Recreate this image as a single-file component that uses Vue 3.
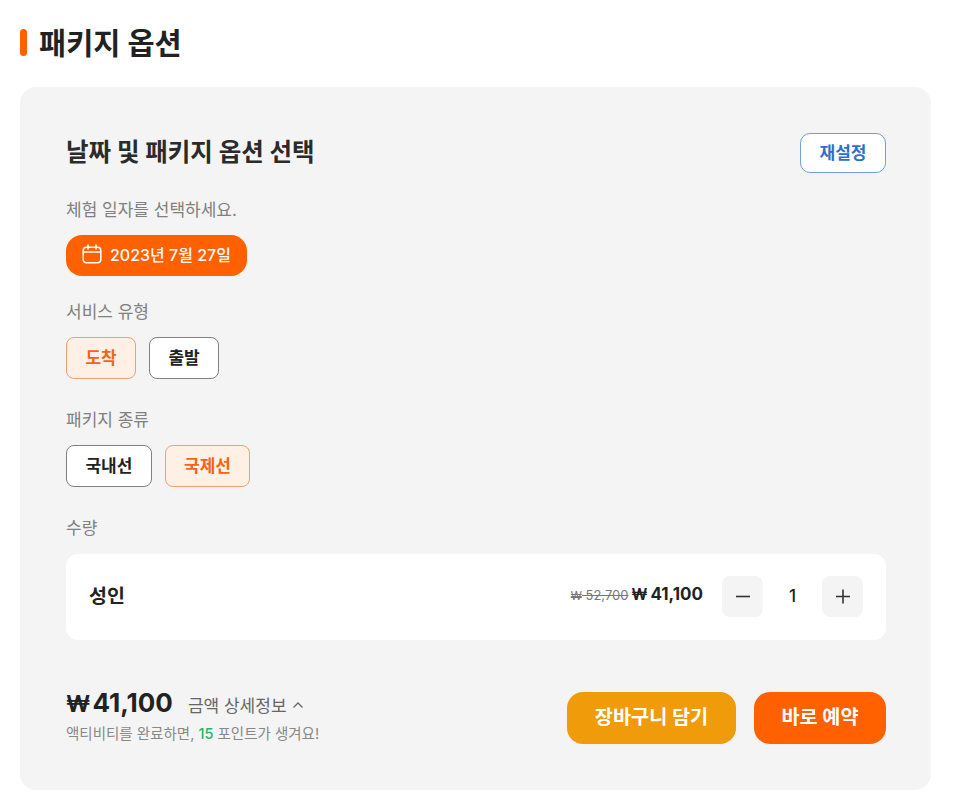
<script setup>
const groups = [
  { label: '서비스 유형', options: [{ text: '도착', on: true }, { text: '출발', on: false }] },
  { label: '패키지 종류', options: [{ text: '국내선', on: false }, { text: '국제선', on: true }] },
]
</script>

<template>
  <div class="page">
    <h1 class="heading"><span class="bar"></span>패키지 옵션</h1>
    <section class="card">
      <div class="card-head">
        <h2>날짜 및 패키지 옵션 선택</h2>
        <button class="reset">재설정</button>
      </div>
      <p class="label first">체험 일자를 선택하세요.</p>
      <button class="date">
        <svg width="20" height="20" viewBox="0 0 20 20" fill="none" stroke="#fff" stroke-width="1.5" stroke-linecap="round">
          <rect x="1.2" y="3.2" width="17.6" height="15.6" rx="3.2" />
          <path d="M1.2 8h17.6M6 1v4M14 1v4" />
        </svg>
        2023년 7월 27일
      </button>
      <div v-for="g in groups" :key="g.label" class="group">
        <p class="label">{{ g.label }}</p>
        <div class="opts">
          <button v-for="o in g.options" :key="o.text" class="opt" :class="{ on: o.on }">{{ o.text }}</button>
        </div>
      </div>
      <p class="label qty-label">수량</p>
      <div class="qty">
        <span class="who">성인</span>
        <span class="old"><span class="won">₩</span> 52,700</span>
        <span class="price"><span class="won">₩</span> 41,100</span>
        <div class="stepper">
          <button class="step">
            <svg width="16" height="16" viewBox="0 0 16 16"><path d="M1 8.5h14" stroke="#333" stroke-width="1.6" /></svg>
          </button>
          <span class="num">1</span>
          <button class="step">
            <svg width="16" height="16" viewBox="0 0 16 16"><path d="M1 8.5h14M8 1.5v14" stroke="#333" stroke-width="1.6" /></svg>
          </button>
        </div>
      </div>
      <div class="foot">
        <div class="sum">
          <div class="total-row">
            <span class="total"><span class="won">₩</span> 41,100</span>
            <span class="detail">금액 상세정보</span>
            <svg class="chev" width="12" height="8" viewBox="0 0 12 8" fill="none"><path d="M1.5 6.5 6 2l4.5 4.5" stroke="#666" stroke-width="1.3" /></svg>
          </div>
          <p class="note">액티비티를 완료하면, <b>15</b> 포인트가 생겨요!</p>
        </div>
        <div class="actions">
          <button class="cta cart">장바구니 담기</button>
          <button class="cta buy">바로 예약</button>
        </div>
      </div>
    </section>
  </div>
</template>

<style>
body { background: #fff; }
</style>

<style scoped>
.page {
  width: 966px;
  height: 810px;
  box-sizing: border-box;
  padding: 23px 35px 20px 20px;
  font-family: Inter, "Noto Sans CJK KR", sans-serif;
  color: #222;
  overflow: hidden;
}
button { font-family: inherit; cursor: pointer; }
p, h1, h2 { margin: 0; }
.won { font-size: 0.9em; }
.heading {
  display: flex;
  align-items: center;
  gap: 12px;
  height: 38px;
  font-size: 29.5px;
  font-weight: 700;
  color: #222;
  padding-bottom: 2px;
  box-sizing: border-box;
}
.bar { width: 7px; height: 27px; border-radius: 4px; background: #ff6000; margin-top: 2px; }
.card {
  margin-top: 26px;
  height: 703px;
  box-sizing: border-box;
  padding: 46px 45px 0 46px;
  background: #f4f4f4;
  border-radius: 16px;
}
.card-head { display: flex; justify-content: space-between; align-items: center; height: 40px; }
.card-head h2 { font-size: 24.5px; font-weight: 700; color: #2b2b2b; padding-bottom: 5px; }
.reset {
  width: 86px; height: 40px; padding: 0 0 4px; background: #fff;
  border: 1px solid #6fa0dc; border-radius: 10px;
  color: #2c6fd0; font-size: 17px; font-weight: 700;
}
.label { font-size: 17px; line-height: 24px; color: #808080; height: 24px; }
.first { margin-top: 25px; }
.date {
  display: flex; align-items: center; gap: 8px;
  margin-top: 13px; height: 41px; width: 181px; padding: 0 16px 4px;
  background: #ff6000; border: 0; border-radius: 16px;
  color: #fff; font-size: 16px; font-weight: 500; white-space: nowrap;
}
.group { margin-top: 24px; }
.group + .group { margin-top: 29px; }
.opts { display: flex; gap: 13px; margin-top: 13px; }
.opt {
  height: 42px; padding: 0 18.4px 4px; background: #fff;
  border: 1px solid #808080; border-radius: 8px;
  font-size: 17px; font-weight: 700; color: #222;
}
.opt.on { background: #fff0e6; border-color: #f0a070; color: #f2641a; }
.qty-label { margin-top: 29px; }
.qty {
  display: flex; align-items: center; margin-top: 14px; height: 86px;
  padding: 0 23px; background: #fff; border-radius: 12px;
}
.who { font-size: 19.5px; font-weight: 600; margin-right: auto; margin-bottom: 5px; }
.old { font-size: 13px; color: #777; text-decoration: line-through; margin-right: 3px; margin-bottom: 4px; }
.price { font-size: 17px; font-weight: 700; margin-bottom: 6px; word-spacing: -1px; }
.stepper { display: flex; align-items: center; margin-left: 19px; margin-bottom: 2px; }
.step {
  display: flex; align-items: center; justify-content: center;
  width: 41px; height: 41px; padding: 0; background: #f4f4f4; border: 0; border-radius: 8px;
}
.num { width: 59px; text-align: center; font-size: 17px; font-weight: 500; }
.foot { display: flex; justify-content: space-between; align-items: center; margin-top: 52px; height: 52px; }
.total-row { display: flex; align-items: center; height: 30px; }
.total { font-size: 26px; font-weight: 700; margin-bottom: 1px; word-spacing: -4px; }
.detail { margin-left: 15px; font-size: 17px; color: #666; margin-top: 3px; }
.chev { margin-left: 5px; margin-top: 4px; }
.note { font-size: 14.5px; line-height: 30px; color: #888; padding-top: 1px; }
.note b { color: #28b36e; font-weight: 500; }
.actions { display: flex; gap: 18px; }
.cta { height: 52px; padding: 0 0 5px; border: 0; border-radius: 16px; color: #fff; font-size: 19.7px; font-weight: 700; }
.cart { width: 169px; background: #f09b0a; }
.buy { width: 132px; background: #ff6000; }
</style>
